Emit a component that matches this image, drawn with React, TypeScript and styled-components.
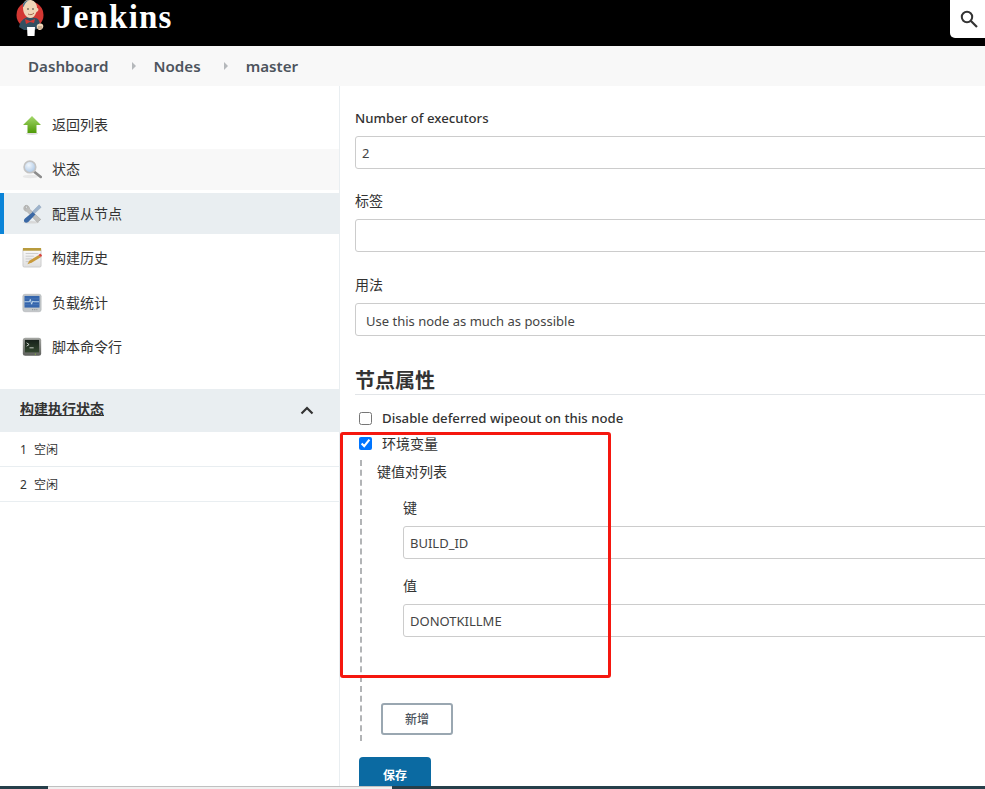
import React from "react";
import styled, { createGlobalStyle } from "styled-components";

const Global = createGlobalStyle`
  html, body { margin: 0; padding: 0; background: #fff; overflow: hidden; }
  * { box-sizing: border-box; }
`;

const FONT = `"Noto Sans", "Noto Sans CJK SC", "Liberation Sans", sans-serif`;

const Page = styled.div`
  position: relative;
  width: 985px;
  height: 789px;
  overflow: hidden;
  background: #fff;
  color: #333;
  font-family: ${FONT};
  font-size: 14px;
  display: flex;
  flex-direction: column;
`;
const Header = styled.header`
  height: 46px;
  flex: none;
  background: #000;
  display: flex;
  align-items: flex-start;
  padding-left: 16px;
`;
const Brand = styled.div`
  font-family: "Liberation Serif", serif;
  font-weight: 700;
  font-size: 33px;
  line-height: 34px;
  letter-spacing: 1.2px;
  color: #fff;
  margin-left: 12px;
`;
const SearchBox = styled.div`
  margin-left: auto;
  width: 35px;
  height: 38px;
  background: #fff;
  border-bottom-left-radius: 5px;
  display: flex;
  align-items: center;
  padding-left: 10px;
`;
const Crumbs = styled.nav`
  height: 40px;
  flex: none;
  background: #f8f8f8;
  display: flex;
  align-items: center;
  padding-left: 28px;
`;
const Crumb = styled.span`
  font-size: 15.15px;
  font-weight: 600;
  color: #4d545d;
`;
const CrumbArrow = styled.span`
  width: 0;
  height: 0;
  border-left: 4px solid #b5b8bb;
  border-top: 4px solid transparent;
  border-bottom: 4px solid transparent;
  margin: 0 18px 0 23px;
`;
const Body = styled.div`
  flex: 1;
  display: flex;
  min-height: 0;
`;
const Side = styled.aside`
  width: 340px;
  flex: none;
  border-right: 1px solid #e9eef1;
  padding-top: 18.5px;
`;
const Task = styled.div<{ $state?: "hover" | "active" }>`
  height: 41px;
  margin-bottom: 3.45px;
  display: flex;
  align-items: center;
  padding-left: ${(p) => (p.$state === "active" ? "18px" : "22px")};
  padding-bottom: 2px;
  gap: 10px;
  font-size: 14px;
  color: #333;
  background: ${(p) =>
    p.$state === "active" ? "#e9eef1" : p.$state === "hover" ? "#f8f8f8" : "transparent"};
  border-left: ${(p) => (p.$state === "active" ? "4px solid #0b84d8" : "none")};
`;
const IconBox = styled.span`
  width: 20px;
  height: 24px;
  flex: none;
  display: flex;
  align-items: center;
  justify-content: center;
  margin-top: 2px;
`;
const ExecHead = styled.div`
  margin-top: 21.5px;
  height: 43px;
  background: #e9eef1;
  display: flex;
  align-items: center;
  justify-content: space-between;
  padding: 0 25px 6px 20px;
  font-size: 14px;
  font-weight: 600;
  color: #333;
  text-decoration: underline;
`;
const ExecRow = styled.div`
  height: 35px;
  border-bottom: 1px solid #e9eef1;
  display: flex;
  align-items: center;
  gap: 7px;
  padding-left: 20px;
  font-size: 12px;
  color: #333;
`;
const ChevronIcon = styled.svg`
  margin-top: 6px;
  fill: none;
  stroke: #333;
  stroke-width: 2.2;
`;
const Main = styled.main`
  flex: 1;
  min-width: 0;
  overflow: hidden;
  padding: 22px 0 0 15px;
`;
const Field = styled.div<{ $mb?: number }>`
  margin-bottom: ${(p) => p.$mb ?? 22}px;
`;
const Label = styled.div<{ $cjk?: boolean }>`
  height: 20px;
  line-height: 20px;
  margin-bottom: 8px;
  font-size: ${(p) => (p.$cjk ? "14px" : "13.2px")};
  font-weight: ${(p) => (p.$cjk ? 400 : 500)};
  color: #333;
`;
const TextBox = styled.div<{ $select?: boolean }>`
  width: 700px;
  height: 33px;
  border: 1px solid #ccc;
  border-radius: 3px;
  padding-left: ${(p) => (p.$select ? "10px" : "6px")};
  padding-top: ${(p) => (p.$select ? "2px" : "0")};
  display: flex;
  align-items: center;
  font-size: 13px;
  color: #444;
  background: #fff;
`;
const Section = styled.h2`
  margin: 30px 0 0;
  height: 29px;
  line-height: 29px;
  font-size: 20px;
  font-weight: 700;
  color: #333;
  border-bottom: 1px solid #e2e5e8;
`;
const CheckRow = styled.label<{ $top: number; $cjk?: boolean }>`
  display: flex;
  align-items: center;
  height: 20px;
  margin-top: ${(p) => p.$top}px;
  padding-left: 4px;
  font-size: ${(p) => (p.$cjk ? "14px" : "13.2px")};
  font-weight: ${(p) => (p.$cjk ? 400 : 500)};
  color: #333;
  input { width: 13px; height: 13px; margin: 0 10px 0 0; flex: none; }
`;
const Nested = styled.div`
  margin: 7px 0 0 5px;
  height: 281px;
  border-left: 2px dashed #b2b4b6;
  padding: 2px 0 0 15px;
`;
const ListTitle = styled.div`
  height: 20px;
  line-height: 20px;
  font-size: 14px;
  color: #333;
`;
const Pair = styled.div`
  margin: 16px 0 0 26px;
`;
const PairField = styled.div`
  margin-bottom: 17px;
`;
const AddButton = styled.div`
  width: 72px;
  height: 32px;
  margin: 66px 0 0 4px;
  border: 2px solid #9aa7b1;
  border-radius: 3px;
  display: flex;
  align-items: center;
  justify-content: center;
  font-size: 12px;
  font-weight: 500;
  color: #4d545d;
  background: #fff;
`;
const SaveButton = styled.div`
  width: 72px;
  height: 36px;
  margin: 16px 0 0 4px;
  border-radius: 4px 4px 0 0;
  background: #0b6aa2;
  display: flex;
  align-items: center;
  justify-content: center;
  font-size: 12px;
  font-weight: 700;
  color: #fff;
`;
const Annotation = styled.div`
  position: absolute;
  left: 340px;
  top: 432px;
  width: 271px;
  height: 246px;
  border: 3px solid #f5170f;
  border-radius: 3px;
  pointer-events: none;
`;
const BottomBar = styled.div`
  position: absolute;
  left: 0;
  right: 0;
  bottom: 0;
  height: 3px;
  background: #263f4a;
`;
const ScrollThumb = styled.div`
  position: absolute;
  left: 48px;
  top: 0;
  width: 344px;
  height: 3px;
  background: #f0f0f0;
  border-top: 1px solid #c0c0c0;
`;

const Logo = () => (
  <svg width="28" height="37" viewBox="0 0 28 37" style={{ flex: "none" }}>
    <circle cx="14" cy="15" r="13.5" fill="#d33833" />
    <path d="M3 27c1-6 5-9 9-10l8 1c3 1 4 4 4 8l-3 3-3 1H8z" fill="#335061" />
    <path d="M7 6c0-5 4-7 8-6 4 1 6 4 6 8 1 0 2 1 1 3-1 1-2 1-2 2-1 3-3 5-6 5-3 0-5-3-6-5-1-2-1-5-1-7z" fill="#f0d6b7" />
    <path d="M7 7c-1-4 3-7 7-7-3 1-4 2-5 4-1 1-1 3-2 3z" fill="#49728b" />
    <path d="M11 9h2M16 9h2" stroke="#49443f" strokeWidth="1" />
    <path d="M12 14c2 1 4 1 6-1" stroke="#a56a50" strokeWidth="1" fill="none" />
    <path d="M9 19l5 2 5-2-1 4-4-1-4 2z" fill="#d33833" />
    <path d="M11 27h8l-.5 9h-7z" fill="#fff" />
    <path d="M21 25c2-2 5-2 6 0 1 2-1 5-3 5-2 0-4-2-3-5z" fill="#f0d6b7" />
    <path d="M23 26v3M25 26v3" stroke="#8a6a55" strokeWidth=".7" />
  </svg>
);

const SearchIcon = () => (
  <svg width="18" height="18" viewBox="0 0 18 18" fill="none" stroke="#333" strokeWidth="2">
    <circle cx="7" cy="7" r="5.2" />
    <path d="M11 11l6 6" strokeWidth="2.2" />
  </svg>
);

const UpIcon = () => (
  <svg width="20" height="20" viewBox="0 0 20 20">
    <defs>
      <linearGradient id="ug" x1="0" y1="0" x2="0" y2="1">
        <stop offset="0" stopColor="#a5d86c" />
        <stop offset="1" stopColor="#4f9a07" />
      </linearGradient>
    </defs>
    <ellipse cx="10" cy="18.5" rx="6" ry="1.5" fill="#ddd" />
    <path d="M10 1l9 9h-4.5v8h-9v-8H1z" fill="url(#ug)" />
  </svg>
);

const LensIcon = () => (
  <svg width="24" height="24" viewBox="0 0 24 24">
    <defs>
      <radialGradient id="lg" cx=".4" cy=".35" r=".7">
        <stop offset="0" stopColor="#f2f7fc" />
        <stop offset="1" stopColor="#a9c6e6" />
      </radialGradient>
    </defs>
    <ellipse cx="10" cy="21" rx="9" ry="2" fill="#e8e8e8" />
    <path d="M15 15.5l7.5 6" stroke="#8c8c8c" strokeWidth="3.2" strokeLinecap="round" />
    <circle cx="9.5" cy="9.5" r="7" fill="url(#lg)" stroke="#c4c4c4" strokeWidth="2" />
  </svg>
);

const ToolsIcon = () => (
  <svg width="24" height="24" viewBox="0 0 24 24">
    <ellipse cx="11" cy="22" rx="10" ry="1.5" fill="#d8d8d8" />
    <path d="M5 1.5C2.5 2 1.5 4.5 2.5 7c1 1.5 2.5 1.8 3.300 1.800L18.500 22l4-3.500L9 6C9 3.500 7.500 1.800 5.500 1.500l1 3.500-2.500 1z" fill="#bfbfbd" stroke="#9a9a98" strokeWidth=".6" />
    <path d="M23 4L20.500 1 12 9.500l2.500 2.500z" fill="#9db3cc" stroke="#7f95ae" strokeWidth=".4" />
    <path d="M13 9.500l3 3L7.500 21.500c-1.500 1.200-3.500 1.200-4.500.2s-1-2.900.5-4.200z" fill="#3a68a5" />
  </svg>
);

const NotepadIcon = () => (
  <svg width="22" height="22" viewBox="0 0 22 22">
    <defs>
      <linearGradient id="ng" x1="0" y1="0" x2="0" y2="1">
        <stop offset="0" stopColor="#fbfbfb" />
        <stop offset="1" stopColor="#dfdfdf" />
      </linearGradient>
    </defs>
    <rect x="1" y="1" width="20" height="20" rx="1.5" fill="url(#ng)" stroke="#bbb" strokeWidth=".7" />
    <rect x="1" y="0" width="20" height="3" fill="#b89b3e" />
    <path d="M4 6h14M4 9h9M4 12h7M4 15h6" stroke="#c8c8c8" strokeWidth="1" />
    <path d="M6 18l2-4 10-6 3 2-10 6z" fill="#c89a3c" />
    <path d="M18 8l3 2 1-2-2-2z" fill="#d9433c" />
  </svg>
);

const MonitorIcon = () => (
  <svg width="24" height="24" viewBox="0 0 24 24">
    <rect x="1" y="1.5" width="22" height="21" rx="2.5" fill="#c4c8ca" stroke="#a8acae" strokeWidth=".6" />
    <rect x="3" y="3.5" width="18" height="14" fill="#3566ad" />
    <path d="M3 10.5h6l1-3 1.500 6 1.500-4 1 1h6.500" stroke="#d6ebf5" strokeWidth="1" fill="none" />
    <path d="M3 7h18M3 14h18" stroke="#5c83bc" strokeWidth=".6" />
    <path d="M12 20h7" stroke="#8d9193" strokeWidth="1.2" strokeDasharray="1.2 1" />
  </svg>
);

const TerminalIcon = () => (
  <svg width="24" height="24" viewBox="0 0 24 24">
    <defs>
      <linearGradient id="tg" x1="0" y1="0" x2="0" y2="1">
        <stop offset="0" stopColor="#a5a7a3" />
        <stop offset="1" stopColor="#5e605c" />
      </linearGradient>
      <linearGradient id="ts" x1="0" y1="0" x2="0" y2="1">
        <stop offset="0" stopColor="#16201a" />
        <stop offset="1" stopColor="#33472f" />
      </linearGradient>
    </defs>
    <rect x="1" y="1" width="22" height="21.5" rx="3" fill="url(#tg)" />
    <rect x="3.5" y="3.5" width="17" height="15" fill="url(#ts)" />
    <path d="M5.5 7l3 2-3 2" stroke="#e4e8e2" strokeWidth="1" fill="none" />
    <path d="M9 13h5" stroke="#e4e8e2" strokeWidth="1" />
    <circle cx="16" cy="20.5" r=".7" fill="#8fd03c" />
  </svg>
);

const Chevron = () => (
  <ChevronIcon width="14" height="9" viewBox="0 0 14 9">
    <path d="M1.5 7.5L7 2l5.500 5.500" />
  </ChevronIcon>
);

export default function App() {
  return (
    <Page>
      <Global />
      <Header>
        <Logo />
        <Brand>Jenkins</Brand>
        <SearchBox><SearchIcon /></SearchBox>
      </Header>
      <Crumbs>
        <Crumb>Dashboard</Crumb>
        <CrumbArrow />
        <Crumb>Nodes</Crumb>
        <CrumbArrow />
        <Crumb>master</Crumb>
      </Crumbs>
      <Body>
        <Side>
          <Task><IconBox><UpIcon /></IconBox>返回列表</Task>
          <Task $state="hover"><IconBox><LensIcon /></IconBox>状态</Task>
          <Task $state="active"><IconBox><ToolsIcon /></IconBox>配置从节点</Task>
          <Task><IconBox><NotepadIcon /></IconBox>构建历史</Task>
          <Task><IconBox><MonitorIcon /></IconBox>负载统计</Task>
          <Task><IconBox><TerminalIcon /></IconBox>脚本命令行</Task>
          <ExecHead>构建执行状态<Chevron /></ExecHead>
          <ExecRow><span>1</span><span>空闲</span></ExecRow>
          <ExecRow><span>2</span><span>空闲</span></ExecRow>
        </Side>
        <Main>
          <Field>
            <Label>Number of executors</Label>
            <TextBox>2</TextBox>
          </Field>
          <Field $mb={23}>
            <Label $cjk>标签</Label>
            <TextBox />
          </Field>
          <Field $mb={0}>
            <Label $cjk>用法</Label>
            <TextBox $select>Use this node as much as possible</TextBox>
          </Field>
          <Section>节点属性</Section>
          <CheckRow $top={13}>
            <input type="checkbox" readOnly />
            Disable deferred wipeout on this node
          </CheckRow>
          <CheckRow $top={5} $cjk>
            <input type="checkbox" checked readOnly />
            环境变量
          </CheckRow>
          <Nested>
            <ListTitle>键值对列表</ListTitle>
            <Pair>
              <PairField>
                <Label $cjk>键</Label>
                <TextBox>BUILD_ID</TextBox>
              </PairField>
              <PairField>
                <Label $cjk>值</Label>
                <TextBox>DONOTKILLME</TextBox>
              </PairField>
            </Pair>
            <AddButton>新增</AddButton>
          </Nested>
          <SaveButton>保存</SaveButton>
        </Main>
      </Body>
      <Annotation />
      <BottomBar><ScrollThumb /></BottomBar>
    </Page>
  );
}
